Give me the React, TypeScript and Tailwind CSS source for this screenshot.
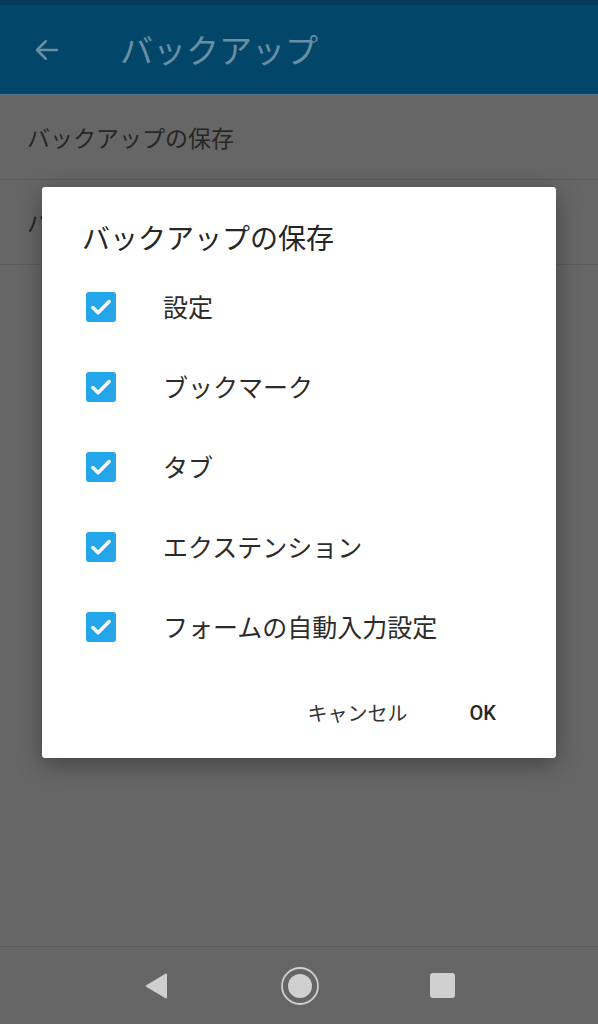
import React from "react";

const options = [
  "設定",
  "ブックマーク",
  "タブ",
  "エクステンション",
  "フォームの自動入力設定",
];

const font = {
  fontFamily: '"Noto Sans CJK JP", Roboto, "Noto Sans", sans-serif',
};

function CheckBox() {
  return (
    <div className="w-[30px] h-[30px] rounded-[3px] bg-[#23a7ea] flex items-center justify-center shrink-0">
      <svg width="26" height="26" viewBox="0 0 24 24" fill="none">
        <path
          d="M4.5 12.5l4.8 4.8L19.5 7"
          stroke="#ffffff"
          strokeWidth="3.2"
          strokeLinecap="round"
          strokeLinejoin="round"
        />
      </svg>
    </div>
  );
}

export default function App() {
  return (
    <div
      className="relative w-[598px] h-[1024px] bg-[#666666] flex flex-col overflow-hidden"
      style={font}
    >
      {/* app bar */}
      <div className="h-[5px] bg-[#053a58]" />
      <div className="h-[89px] bg-[#02476a] flex items-center">
        <svg
          className="ml-[32px]"
          width="30"
          height="30"
          viewBox="0 0 24 24"
          fill="none"
        >
          <path
            d="M20 12H4.5M11 5l-7 7 7 7"
            stroke="#6b8ea3"
            strokeWidth="2"
            strokeLinecap="round"
            strokeLinejoin="round"
          />
        </svg>
        <span className="ml-[58px] text-[33px] leading-none text-[#6b8ea3]">
          バックアップ
        </span>
      </div>
      <div className="h-px bg-[#58718a]" />

      {/* list */}
      <div className="h-[85px] flex items-center pl-[27px] border-b border-[#5c5c5c]">
        <span className="text-[23px] text-[#262626]">バックアップの保存</span>
      </div>
      <div className="h-[85px] flex items-center pl-[27px] border-b border-[#5c5c5c]">
        <span className="text-[23px] text-[#262626]">バックアップの復元</span>
      </div>

      <div className="flex-1" />

      {/* nav bar */}
      <div className="h-[78px] border-t border-[#5a5a5a] flex items-center justify-center gap-[110px]">
        <svg width="26" height="28" viewBox="0 0 26 28">
          <path
            d="M23 2.5v23a1 1 0 0 1-1.5.8L2.2 14.8a1 1 0 0 1 0-1.6L21.5 1.7A1 1 0 0 1 23 2.5z"
            fill="#d0d0d0"
          />
        </svg>
        <svg width="40" height="40" viewBox="0 0 40 40">
          <circle cx="20" cy="20" r="18" fill="none" stroke="#d0d0d0" strokeWidth="1.8" />
          <circle cx="20" cy="20" r="12" fill="#d0d0d0" />
        </svg>
        <div className="w-[25px] h-[25px] rounded-[3px] bg-[#d0d0d0]" />
      </div>

      {/* dialog */}
      <div className="absolute left-[42px] top-[187px] w-[514px] h-[571px] bg-white rounded-[3px] shadow-[0_6px_24px_rgba(0,0,0,0.35)] flex flex-col">
        <div className="pt-[32px] pl-[40px] text-[28px] leading-[36px] text-[#262626]">
          バックアップの保存
        </div>
        <div className="mt-[12px] flex flex-col">
          {options.map((o) => (
            <div key={o} className="h-[80px] flex items-center pl-[44px]">
              <CheckBox />
              <span className="ml-[47px] text-[25px] text-[#2b2b2b]">{o}</span>
            </div>
          ))}
        </div>
        <div className="mt-[22px] h-[48px] flex items-center justify-end pr-[60px] gap-[62px]">
          <span className="text-[20px] text-[#333333]">キャンセル</span>
          <span
            className="text-[20px] font-medium text-[#262626]"
            style={{ fontFamily: "Roboto, sans-serif" }}
          >
            OK
          </span>
        </div>
      </div>
    </div>
  );
}
